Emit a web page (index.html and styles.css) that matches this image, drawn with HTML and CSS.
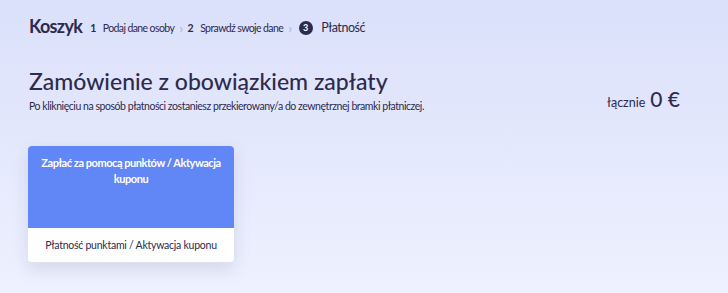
FILE: index.html
```html
<!DOCTYPE html>
<html lang="pl">
<head>
    <meta charset="UTF-8">
    <meta name="viewport" content="width=device-width, initial-scale=1.0">
    <title>Koszyk - Płatność</title>
    <link rel="stylesheet" href="styles.css">
</head>
<body>
    <div class="page">
        <!-- Cart steps -->
        <div class="cart-head">
            <h1>Koszyk</h1>
            <ol class="steps">
                <li class="step"><span class="num">1</span> Podaj dane osoby</li>
                <li class="sep">&rsaquo;</li>
                <li class="step"><span class="num">2</span> Sprawdź swoje dane</li>
                <li class="sep">&rsaquo;</li>
                <li class="step active"><span class="num">3</span> Płatność</li>
            </ol>
        </div>

        <!-- Order summary -->
        <div class="order">
            <div class="order-info">
                <h2>Zamówienie z obowiązkiem zapłaty</h2>
                <p>Po kliknięciu na sposób płatności zostaniesz przekierowany/a do zewnętrznej bramki płatniczej.</p>
            </div>
            <div class="total">
                <span class="label">łącznie</span>
                <span class="amount">0 €</span>
            </div>
        </div>

        <!-- Payment methods -->
        <div class="methods">
            <div class="method">
                <div class="method-top">Zapłać za pomocą punktów / Aktywacja kuponu</div>
                <div class="method-bottom">Płatność punktami / Aktywacja kuponu</div>
            </div>
        </div>
    </div>
</body>
</html>
```

FILE: styles.css
```css
html, body {
    height: 100%;
}

body {
    margin: 0;
    font-family: Lato, "Noto Sans", sans-serif;
    color: #2d2a4d;
    background: linear-gradient(180deg, #dbe0fb 0%, #e6eafd 60%, #eef1fe 100%);
}

.page {
    padding: 15px 48px 0 29px;
}

.cart-head {
    display: flex;
    align-items: center;
}

.cart-head h1 {
    margin: 0;
    font-size: 18px;
    font-weight: 700;
    letter-spacing: -0.7px;
    margin-right: 8px;
}

.steps {
    display: flex;
    align-items: center;
    list-style: none;
    margin: 0;
    padding: 0;
    font-size: 10.5px;
    letter-spacing: -0.6px;
    gap: 5px;
    padding-top: 3px;
}

.step .num {
    font-weight: 700;
    margin-right: 5px;
}

.sep {
    color: #a9b2da;
    font-size: 14px;
}

.step.active {
    font-size: 12.5px;
    letter-spacing: -0.45px;
}

.step.active .num {
    display: inline-flex;
    align-items: center;
    justify-content: center;
    width: 14px;
    height: 14px;
    border-radius: 50%;
    background-color: #2d2a4d;
    color: #fff;
    font-size: 9px;
    letter-spacing: 0;
    margin-right: 6px;
    margin-left: 2px;
    vertical-align: 1px;
}

.order {
    display: flex;
    justify-content: space-between;
    align-items: flex-start;
    margin-top: 30px;
}

.order-info h2 {
    margin: 0;
    font-size: 23px;
    font-weight: 500;
}

.order-info p {
    margin: 5px 0 0;
    font-size: 10.5px;
    letter-spacing: -0.45px;
}

.total {
    margin-top: 19px;
    display: flex;
    align-items: baseline;
    gap: 5px;
}

.total .label {
    font-size: 12.5px;
}

.total .amount {
    font-size: 21px;
    font-weight: 500;
}

.methods {
    margin-top: 34px;
}

.method {
    width: 206px;
    margin-left: -1px;
    border-radius: 4px;
    overflow: hidden;
    background-color: #fff;
    box-shadow: 0 6px 16px rgba(120, 130, 170, 0.22);
    border-bottom: 1px solid #dfe2ee;
}

.method-top {
    height: 82px;
    box-sizing: border-box;
    padding: 9px 8px;
    background-color: #6186f5;
    color: #fff;
    font-size: 11px;
    font-weight: 700;
    letter-spacing: -0.45px;
    text-align: center;
    line-height: 16px;
}

.method-bottom {
    padding: 11px 8px 11px;
    font-size: 10.5px;
    letter-spacing: -0.25px;
    text-align: center;
}
```
